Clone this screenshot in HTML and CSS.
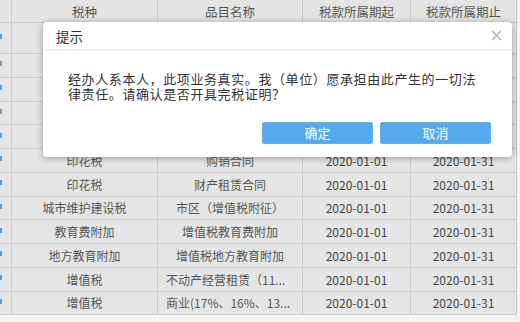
FILE: index.html
```html
<!DOCTYPE html>
<html lang="zh-CN">
<head>
<meta charset="utf-8">
<title>提示</title>
<link rel="stylesheet" href="styles.css">
</head>
<body>
<div class="page">
  <div class="table">
    <div class="row head">
      <div class="cell edge"></div>
      <div class="cell">税种</div>
      <div class="cell">品目名称</div>
      <div class="cell">税款所属期起</div>
      <div class="cell">税款所属期止</div>
    </div>
    <div class="row first">
      <div class="cell edge"><span class="mark"></span></div>
      <div class="cell"></div><div class="cell"></div><div class="cell"></div><div class="cell"></div>
    </div>
    <div class="row">
      <div class="cell edge"><span class="mark"></span></div>
      <div class="cell"></div><div class="cell"></div><div class="cell"></div><div class="cell"></div>
    </div>
    <div class="row">
      <div class="cell edge"><span class="mark"></span></div>
      <div class="cell"></div><div class="cell"></div><div class="cell"></div><div class="cell"></div>
    </div>
    <div class="row">
      <div class="cell edge"><span class="mark"></span></div>
      <div class="cell"></div><div class="cell"></div><div class="cell"></div><div class="cell"></div>
    </div>
    <div class="row">
      <div class="cell edge"><span class="mark"></span></div>
      <div class="cell"></div><div class="cell"></div><div class="cell"></div><div class="cell"></div>
    </div>
    <div class="row">
      <div class="cell edge"><span class="mark"></span></div>
      <div class="cell">印花税</div>
      <div class="cell">购销合同</div>
      <div class="cell date">2020-01-01</div>
      <div class="cell date">2020-01-31</div>
    </div>
    <div class="row">
      <div class="cell edge"><span class="mark"></span></div>
      <div class="cell">印花税</div>
      <div class="cell">财产租赁合同</div>
      <div class="cell date">2020-01-01</div>
      <div class="cell date">2020-01-31</div>
    </div>
    <div class="row">
      <div class="cell edge"><span class="mark"></span></div>
      <div class="cell">城市维护建设税</div>
      <div class="cell">市区（增值税附征）</div>
      <div class="cell date">2020-01-01</div>
      <div class="cell date">2020-01-31</div>
    </div>
    <div class="row">
      <div class="cell edge"><span class="mark"></span></div>
      <div class="cell">教育费附加</div>
      <div class="cell">增值税教育费附加</div>
      <div class="cell date">2020-01-01</div>
      <div class="cell date">2020-01-31</div>
    </div>
    <div class="row">
      <div class="cell edge"><span class="mark"></span></div>
      <div class="cell">地方教育附加</div>
      <div class="cell">增值税地方教育附加</div>
      <div class="cell date">2020-01-01</div>
      <div class="cell date">2020-01-31</div>
    </div>
    <div class="row">
      <div class="cell edge"><span class="mark"></span></div>
      <div class="cell">增值税</div>
      <div class="cell start">不动产经营租赁（11...</div>
      <div class="cell date">2020-01-01</div>
      <div class="cell date">2020-01-31</div>
    </div>
    <div class="row">
      <div class="cell edge"><span class="mark"></span></div>
      <div class="cell">增值税</div>
      <div class="cell start">商业(17%、16%、13...</div>
      <div class="cell date">2020-01-01</div>
      <div class="cell date">2020-01-31</div>
    </div>
  </div>

  <div class="dialog">
    <div class="dialog-title">
      <span>提示</span>
      <svg class="close" width="11" height="11" viewBox="0 0 11 11" aria-hidden="true">
        <path d="M1 1 L10 10 M10 1 L1 10" stroke="#a8a8a8" stroke-width="1.1" fill="none"/>
      </svg>
    </div>
    <div class="dialog-body">
      <p class="message">经办人系本人，此项业务真实。我（单位）愿承担由此产生的一切法律责任。请确认是否开具完税证明？</p>
    </div>
    <div class="dialog-foot">
      <button class="btn">确定</button>
      <button class="btn">取消</button>
    </div>
  </div>
</div>
</body>
</html>
```

FILE: styles.css
```css
html, body {
  margin: 0;
  padding: 0;
}
body {
  background: #f3f3f3;
  font-family: "Noto Sans CJK SC", "Noto Sans", sans-serif;
  width: 520px;
  height: 322px;
  overflow: hidden;
}
.page {
  position: relative;
  width: 520px;
  height: 322px;
}
.table {
  width: 517px;
  background: #e5e5e5;
  color: #555;
  font-size: 12px;
}
.row {
  display: grid;
  grid-template-columns: 12px 146px 145px 108px 106px;
  height: 23.75px;
  box-sizing: border-box;
  border-bottom: 1px solid #cbcbcb;
}
.row.head {
  height: 23px;
  background: #e4e4e4;
  font-size: 12.5px;
  color: #555;
}
.row.first {
  height: 31px;
}
.cell {
  box-sizing: border-box;
  border-right: 1px solid #cbcbcb;
  display: flex;
  align-items: center;
  justify-content: center;
  white-space: nowrap;
  overflow: hidden;
  min-width: 0;
  padding: 0 8px;
}
.cell.edge {
  padding: 0;
  justify-content: flex-start;
}
.cell.start {
  justify-content: flex-start;
}
.cell.date {
  color: #444;
}
.mark {
  display: block;
  width: 2px;
  height: 5px;
  margin-top: -3px;
  background: #4b9be0;
}
.dialog {
  position: absolute;
  left: 43px;
  top: 22px;
  width: 469px;
  height: 135px;
  background: #fff;
  border-radius: 4px;
  box-shadow: 0 1px 7px rgba(0, 0, 0, 0.35);
  display: flex;
  flex-direction: column;
  box-sizing: border-box;
}
.dialog-title {
  height: 27px;
  flex: none;
  border-bottom: 2px solid #f0f0f0;
  display: flex;
  align-items: center;
  justify-content: space-between;
  padding: 0 10px 0 13px;
  font-size: 13.5px;
  color: #333;
}
.close {
  display: block;
}
.dialog-body {
  padding: 20px 25px 0 25px;
}
.message {
  margin: 0;
  font-size: 13px;
  letter-spacing: 0.6px;
  line-height: 15px;
  color: #333;
}
.dialog-foot {
  margin-top: auto;
  display: flex;
  justify-content: flex-end;
  gap: 7px;
  padding: 0 21px 13px 0;
}
.btn {
  width: 111px;
  height: 22px;
  border: 1px solid #5eb0f0;
  border-radius: 2px;
  background: #55aaee;
  color: #fff;
  font-family: "Noto Sans CJK SC", "Noto Sans", sans-serif;
  font-size: 13px;
  line-height: 20px;
  padding: 0;
}
```
